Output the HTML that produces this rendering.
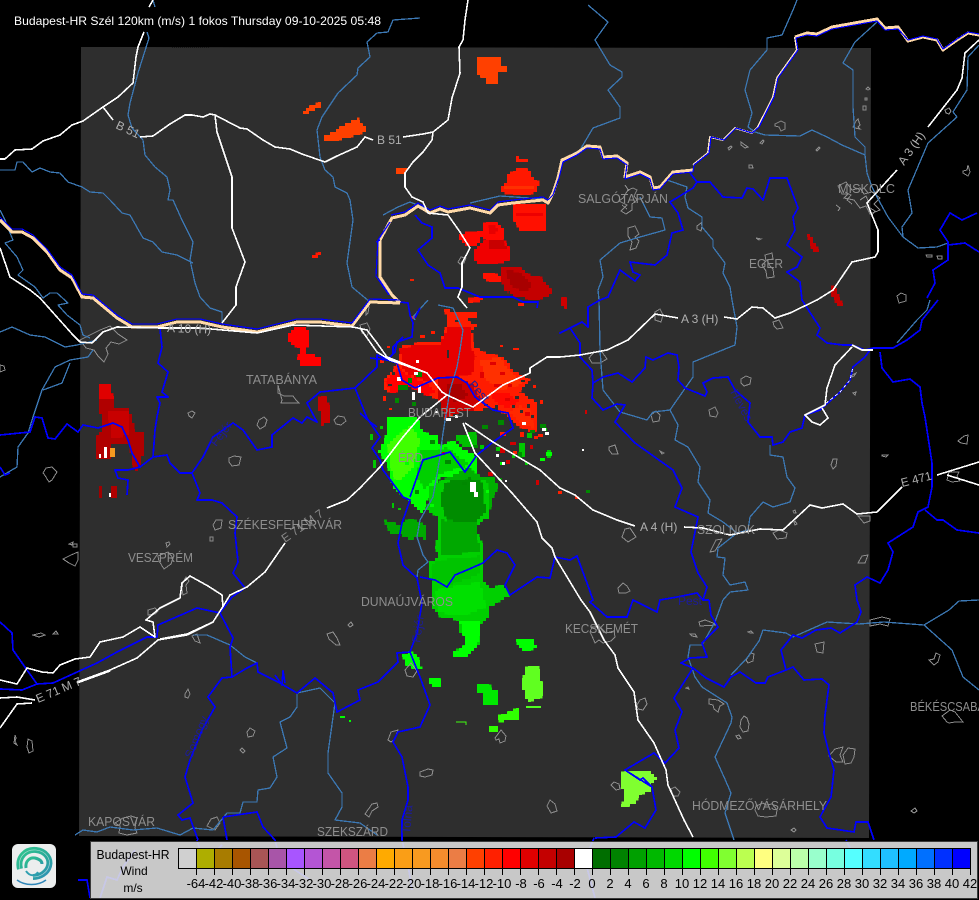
<!DOCTYPE html>
<html><head><meta charset="utf-8"><title>Budapest-HR Wind</title>
<style>
html,body{margin:0;padding:0;background:#000;width:979px;height:900px;overflow:hidden}
svg{display:block;font-family:"Liberation Sans",sans-serif}
.b{fill:none;stroke:#0000ff;stroke-width:1.7;stroke-linejoin:round;shape-rendering:crispEdges}
.l{fill:none;stroke:#3c78b4;stroke-width:1.3;stroke-linejoin:round;shape-rendering:crispEdges}
.w{fill:none;stroke:#fff;stroke-width:1.6;stroke-linejoin:round;shape-rendering:crispEdges}
.t{fill:none;stroke:#8c8c8c;stroke-width:1;shape-rendering:crispEdges}
.c{fill:#8e8e8e;font-size:13px}
.h{fill:#b0b0b0;font-size:12px}
.r{fill:#1c1c9c;font-size:12px}
.n{fill:#000;font-size:13px;text-anchor:middle}
</style></head><body>
<svg width="979" height="900" viewBox="0 0 979 900" xmlns="http://www.w3.org/2000/svg">
<defs>
<filter id="pix" filterUnits="userSpaceOnUse" x="0" y="0" width="979" height="900" color-interpolation-filters="sRGB">
<feFlood x="1" y="1" width="1" height="1" flood-color="#000"/>
<feComposite width="3" height="3"/>
<feTile result="a"/>
<feComposite in="SourceGraphic" in2="a" operator="in"/>
<feMorphology operator="dilate" radius="1"/>
</filter>
<linearGradient id="g" x1="0" y1="0" x2="1" y2="1"><stop offset="0" stop-color="#30c48e"/><stop offset=".6" stop-color="#2aa89a"/><stop offset="1" stop-color="#2f8fb8"/></linearGradient>
</defs>
<rect width="979" height="900" fill="#000"/>
<polygon points="81,47 871,48 869,838 79,836" fill="#2e2e2e"/>
<path d="M172 47h38M520 47h37M195 838h35M560 838h30" stroke="#000" stroke-width="1" stroke-dasharray="1 1"/>

<!-- radar -->
<g filter="url(#pix)" shape-rendering="crispEdges">
<polygon fill="#ff4000" points="477,58 491,58 491,56 492,58 500,58 500,67 507,67 507,73 498,73 498,83 485,83 485,78 477,75"/>
<polygon fill="#ff4000" points="302,112 311,106 321,102 322,106 308,113 303,114"/>
<polygon fill="#ff4000" points="323,137 335,131 345,124 358,118 360,123 365,127 365,132 350,137 342,139 328,142 323,141"/>
<polygon fill="#ff4000" points="396,168 403,168 408,167 405,173 396,173"/>
<polygon fill="#ff1800" points="312,256 318,253 322,251 319,256 314,259 311,258"/>
<polygon fill="#ff1800" points="515,157 518,156 520,159 529,160 529,163 518,162 515,161"/>
<polygon fill="#ff1800" points="515,170 520,168 530,170 533,178 539,182 537,190 530,195 502,193 502,186 507,183 508,175"/>
<rect x="505" y="186" width="28" height="3" fill="#ff3000"/>
<polygon fill="#ff1000" points="512,203 546,203 545,220 545,232 520,230 514,220 512,212"/>
<rect x="515" y="213" width="28" height="3" fill="#ee0000"/>
<polygon fill="#ff0800" points="482,224 495,222 503,228 505,238 498,240 480,238 478,245 465,245 458,238 460,233 482,232"/>
<polygon fill="#e80000" points="487,225 495,224 500,232 490,234"/>
<polygon fill="#f00000" points="485,241 505,241 510,250 511,258 505,262 480,265 474,260 474,250"/>
<polygon fill="#c80000" points="488,241 504,241 508,250 490,248"/>
<polygon fill="#ff1000" points="483,273 490,272 500,276 503,283 485,280"/>
<polygon fill="#c40000" points="500,275 503,266 520,268 530,275 540,276 548,285 553,293 545,298 533,300 515,296 505,290"/>
<polygon fill="#a80000" points="505,270 520,272 532,285 528,292 512,288"/>
<polygon fill="#d00000" points="560,300 564,297 568,300 566,308 562,306"/>
<polygon fill="#ff1000" points="467,299 483,297 484,301 467,302"/>

<polygon fill="#ff0000" points="295,327 303,326 310,332 310,345 305,348 305,355 315,355 320,358 320,367 300,366 298,358 300,348 292,345 287,340 287,335"/>
<polygon fill="#c80000" points="317,398 325,396 329,405 329,422 322,425 320,412 317,405"/>
<polygon fill="#c40000" points="808,234 811,236 819,251 814,253 809,242"/>
<polygon fill="#c40000" points="830,285 835,288 843,305 838,306 832,295"/>

<polygon fill="#b00000" points="100,384 110,384 114,400 114,407 128,407 133,420 134,432 143,432 143,455 138,470 135,472 131,455 130,445 112,445 110,458 97,458 97,437 103,430 103,418 98,410"/>
<polygon fill="#e00000" points="99,385 110,384 113,398 100,398"/>
<polygon fill="#c80000" points="108,412 128,412 130,435 112,438"/>
<rect x="98" y="487" width="4" height="10" fill="#a00000"/>
<rect x="110" y="485" width="7" height="12" fill="#b00000"/>

<polygon fill="#ff1c00" points="442,309 450,308 451,312 465,312 477,313 477,317 466,318 470,323 473,323 480,323 472,330 473,345 482,352 503,357 515,372 530,380 520,392 537,403 538,428 533,433 520,427 507,415 493,407 473,412 460,410 445,420 440,400 420,392 410,385 392,393 385,390 385,380 398,363 403,345 420,343 440,342 447,325 447,315"/>
<polygon fill="#e60000" points="400,348 420,345 440,344 448,328 470,326 470,345 476,356 472,376 440,378 428,382 410,375 402,367"/>
<polygon fill="#ff0000" points="385,382 398,368 410,376 428,384 436,392 428,396 410,387 392,393"/>
<polygon fill="#c80000" points="437,378 457,377 473,384 480,400 473,410 460,412 445,418 438,398"/>
<polygon fill="#a80000" points="446,385 460,384 468,396 455,402 447,398"/>
<polygon fill="#ff3000" points="480,360 500,358 512,374 522,384 500,390 485,378"/>
<polygon fill="#ff2800" points="510,412 520,406 530,410 534,428 524,426"/>
<polygon fill="#ff0800" points="492,392 510,394 520,402 508,408 494,402"/>

<polygon fill="#00ff00" points="378,452 385,440 388,418 417,417 423,433 437,435 440,447 453,440 460,447 477,457 478,473 465,476 440,477 427,500 423,513 408,500 393,487 387,463"/>
<polygon fill="#40ff00" points="388,445 410,425 420,440 412,470 396,482 390,465"/>
<polygon fill="#00d000" points="420,450 448,448 470,465 440,474 425,490 417,478"/>
<polygon fill="#00c000" points="454,437 475,432 478,445 470,448 460,445"/>
<polygon fill="#00b000" points="427,507 443,480 470,467 480,477 493,477 498,487 492,500 488,520 440,520"/>
<polygon fill="#00d000" points="443,480 430,487 427,510 438,517 438,530 436,548 438,558 428,563 428,575 433,583 433,608 440,617 458,620 459,632 467,634 466,645 453,652 453,658 467,657 479,644 480,624 488,617 488,608 510,595 503,585 490,588 483,580 483,572 482,543 476,530 482,520 490,517 487,480"/>
<polygon fill="#008c00" points="445,482 470,478 484,482 485,512 472,526 446,520 440,500"/>
<polygon fill="#00a800" points="441,520 476,522 480,552 441,556"/>
<polygon fill="#00c400" points="438,560 480,556 480,574 450,585 432,578 430,566"/>
<polygon fill="#00e000" points="436,590 480,582 486,607 462,616 438,612"/>
<polygon fill="#00ff00" points="460,622 480,622 478,644 466,656 454,656 454,652 466,645"/>
<polygon fill="#00a800" points="384,520 400,525 410,518 425,525 425,540 418,536 410,540 402,535 390,533"/>
<polygon fill="#00ff00" points="403,655 410,651 418,657 422,670 413,668 405,664"/>
<polygon fill="#00ff00" points="517,640 526,638 534,640 536,647 528,652 518,648"/>
<polygon fill="#00ff00" points="428,678 437,677 442,682 441,687 432,687"/>
<polygon fill="#60ff20" points="525,668 533,665 538,665 541,680 544,690 541,698 528,702 525,696 522,684"/>
<polygon fill="#00e800" points="477,684 490,684 491,690 497,690 497,704 483,704 483,692 477,692"/>
<polygon fill="#30ff00" points="498,716 507,714 510,710 518,709 518,719 500,722"/>
<rect x="488" y="727" width="11" height="4" fill="#30ff00"/>
<polygon fill="#80ff30" points="620,773 634,771 642,770 650,772 657,778 650,785 652,790 640,795 635,803 623,808 620,805 625,800 624,790 620,785"/>
</g>
<g shape-rendering="crispEdges">
<rect x="110" y="448" width="5" height="9" fill="#f59a20"/>
<rect x="104" y="447" width="3" height="11" fill="#fff"/>
<rect x="99" y="454" width="2" height="4" fill="#fff"/>
<rect x="109" y="493" width="2" height="4" fill="#fff"/>
<rect x="410" y="279" width="4" height="2" fill="#f02000"/>
<rect x="526" y="706" width="15" height="2" fill="#50ff20"/>
<path d="M456 722h10v3" fill="none" stroke="#40ff10"/>
<rect x="340" y="716" width="5" height="2" fill="#00ff00"/>
<rect x="349" y="720" width="2" height="2" fill="#00ff00"/>
<!-- holes in precip -->
<path fill="#2e2e2e" d="M510 366h4v3h-4zM521 380h4v2h-4zM525 392h3v3h-3zM515 396h4v3h-4zM527 404h3v4h-3zM520 410h3v3h-3zM531 415h3v3h-3zM512 405h3v3h-3zM484 404h4v2h-4zM392 372h3v3h-3zM388 384h4v2h-4zM398 390h3v3h-3zM455 320h4v2h-4zM470 318h3v3h-3zM447 350h2v8h-2zM495 405h3v3h-3z"/>
<path fill="#e00000" d="M490 362h6v3h-6zM500 372h5v3h-5zM494 384h8v3h-8zM508 384h4v3h-4zM505 398h5v3h-5zM480 372h4v6h-4zM525 412h5v4h-5z"/>
<path fill="#ff1c00" d="M520 432h4v5h-4zM534 436h4v3h-4zM500 432h6v4h-6zM470 300h3v3h-3zM380 360h4v3h-4zM383 396h3v5h-3zM411 316h4v3h-4zM518 303h6v3h-6zM387 346h3v2h-3zM420 335h5v3h-5zM431 331h4v3h-4zM513 348h6v2h-6zM500 345h3v2h-3zM540 400h3v4h-3zM533 385h3v3h-3zM389 408h3v2h-3z"/>
<path fill="#00c800" d="M370 434h3v6h-3zM380 426h3v3h-3zM373 460h3v8h-3zM392 503h2v5h-2zM398 508h3v2h-3zM519 443h6v14h-6zM547 450h4v8h-4zM527 433h5v5h-5zM543 428h4v3h-4zM496 447h5v4h-5zM512 455h3v3h-3zM525 462h3v3h-3zM480 445h4v4h-4z"/>
<path fill="#00ff00" d="M405 462h4v3h-4zM500 462h5v3h-5zM540 458h5v3h-5zM546 452h6v4h-6zM486 490h3v3h-3zM430 504h4v3h-4z"/>
<path fill="#008800" d="M416 372h6v5h-6zM398 385h10v5h-10zM408 378h4v5h-4zM412 402h4v4h-4zM498 420h6v5h-6zM530 430h5v3h-5zM540 424h6v4h-6zM462 482h5v3h-5zM498 478h4v3h-4zM473 445h5v3h-5zM518 452h4v6h-4zM586 490h4v3h-4zM395 398h4v5h-4zM482 425h6v4h-6zM430 440h5v4h-5zM445 460h6v4h-6zM415 490h4v4h-4z"/>
<path fill="#d00000" d="M442 452h3v3h-3zM500 448h5v5h-5zM510 442h6v3h-6zM506 460h4v4h-4zM530 445h3v4h-3zM475 493h3v4h-3zM488 472h5v4h-5zM536 480h3v5h-3zM585 410h2v4h-2z"/>
<path fill="#fff" d="M416 360h3v3h-3zM414 372h4v3h-4zM397 377h4v4h-4zM418 385h3v8h-3zM412 392h3v8h-3zM446 418h5v3h-5zM455 415h3v3h-3zM470 482h6v10h-6zM474 492h4v5h-4zM496 454h3v3h-3zM542 428h4v3h-4zM505 480h2v2h-2zM545 432h4v3h-4zM522 422h4v3h-4zM435 411h3v2h-3zM502 462h3v3h-3zM582 449h2v2h-2z"/>
<path fill="#ff2000" d="M538 434h5v3h-5zM513 451h4v3h-4zM558 491h4v3h-4zM575 496h3v3h-3z"/>
</g>

<!-- towns -->
<g class="t">
<path d="M775 124l6-3 4 2v6l-4 2-2-4-4-1zM853 127l3-6 2-2 2 6-2 2 2 2-5-1zM628 190l-5 8-4 3 8 4-6 6 5 3 6-4 0-6 5-4-3-4 3-6-4-2zM628 228l7-2 4 8-4 3 4 4-3 7-6 2 2-8-4-6zM697 226l4-3 1 3-1 5-4-2zM765 255l7-2 1 6-6 1 3 6 3 3 1 8-7 1-1-7-4-6 4-4zM838 186l8-4 6 8 8-2 4 6 8-2 8 6-6 6 6 6-10 4-4-8-6 2-6-8-10-2 4-4-6 0zM741 142l4 3 3 2-3 1-4-3zM760 143l3-3 1 1-2 3zM728 148l3-2 1 1-3 3zM816 150l3-3 1 1-3 3zM749 165l3 0 1 3-4 0zM756 238l5 1-2 1zM866 89l2-2 2 2-2 1zM865 98h2v2h-2zM863 106h3v4h-3zM945 110l4-2 2 3-2 3-3-1zM963 171l4-1 1-5 2 7-2 4-5-3zM926 255h6v2h-5zM937 256h5v3h-4zM897 296l4-3 5 2 0 6-7 2zM589 358l5-6 8 0 5 7-7 4-8 0zM655 312l5-3 3 6-2 7-6-2zM773 322l6-2 4 8-6 1-3-3zM741 379l5-3 5 2-1 6-6 2-3-3zM709 410l6-3 3 6-2 4-6-1zM651 415l5-4 4 4-1 6-6 1zM609 447l6-2 3 9-6 0-3-4zM660 451l4 2-2 1zM622 537l3-8 5-1 6 9-8 5zM773 533l6-3 8 3-1 5-9 1zM710 552l6-12 6-1-4 7-3 5zM858 563l4-7 6-1-3 8zM618 588l5-5 4 3 3 5-4 2-7 0zM831 465l2-6 4 0-1 7-3 3zM958 441l6-5 4-1-1 9-6-1zM882 455h6l-2 2-4-1zM947 480l2-8 10 0-2 4 3 5-8 1zM858 516l12 0 0 5-6 2zM793 511l2-1 1 3-2 0zM795 521l2 3-2 1-1-3zM852 375l4-2-2 3-2 1zM853 393l3-1-1 3zM257 425l2-5 5-3 3 3-2 6-5 3zM188 413l4-2 3 2-3 5-3-2zM229 458l5-2 7 1-2 8-7 1-3-4zM334 420l4-4 6 1 2 4-5 4-5-1zM278 385l0 8 6 3 9 0 3 4 3 3-18 0 1-3zM43 473l3-5 6-1 5 5-5 8-3 2-5-8zM80 340l20-10 10-4 8 8 9 6-8 4-8-2-5 6 2 6-4 8-6-6-4-6-8-2zM0 365l4 1 1 4-5 2zM360 325l7-2 3 6-3 7-5-3zM366 305l3 2-1 6-2 2zM213 525l3-5 6 0-1 8-6 2zM210 537h3v4h-3zM166 543l3-1 1 2-3 3zM158 556l10-4 5 6-2 6-7 5-5-8zM63 559l8-4 7-3 0 8-3 6-6-3zM69 544l4-2-1 3zM73 544h4v3h-4zM183 582l3-5 3 4-3 4 1 8-4 2-1-6zM148 610l7-2 3 3-3 3-7 1zM185 694l3-5 2 5-2 4-3-1zM247 732l3-4 5 3-2 5-5 1zM240 750l2-2 3 3-2 2zM327 634l6-2 4 6 3 7-4 0-7-6zM348 625l3-3 2 3-3 2zM365 814l7-10 5-1 1 4-6 4-3 6zM388 740l3-8 7-2-4 10-3 2zM207 826l4-7 6-2 3 6-5 7-6-3zM115 823l8-5 8-2 6 2-2 10 2 5-10 2-8-2 1-7zM27 747l1-8 4 2 1 10-4 2zM15 735l1 3-1 3 2 4-3-2zM33 635l8-2 4 2-6 2zM53 634l5 0-2-3zM192 636l5-2 3 9-5-2zM405 670l6-7 6 8-4 6-6-1zM590 632l2-5 8 0 6 6 8-2 1 6-4 4-8 2-4-3-4 3-3-7zM637 705l3-5 5-2 2 6-4 6-5-1zM611 785l3-3 5 2 1 5-4 1zM547 806l3-6 5 4 2 7-6 2zM495 738l6-8 5 6-1 5-5 2-1-4-3 1zM420 772l8-3 5 1-1 5-7 2-5-1zM671 789l4-2 5 5-2 4-5 0zM709 699l9 1 6 4-4 2-2 6-4-3-1-4-4-1zM741 720l3-4 3 2 2 6-1 7-5 1-3-5zM736 736l3-1 2 3-3 1zM746 660l5-7 3 1-1 7-5 2zM699 622l6-2 8 3 3 2-16 1zM690 634l5 0 2 3-5-1zM748 632l3-1 2 2-3 0zM815 644l9-2-1 11-6-1zM829 756l6-7 8-2-3 8 3 7-7 0zM843 755l5-7 7 1-1 8-3 6-6 1zM756 806l7-3 3 2 6-1 5 6-1 6-10 1-8-1-3-6zM791 830l3-2 2 2-2 2zM911 811l4-3 2 3-3 2zM942 716l8-6 5 2 8 10-8 0-6 1-2-1zM929 660l5-1 2-6 4 2-2 7-4 3zM870 620l12-3 8 2-2 7-8-2-10 2zM686 688l2-1 1 2zM458 262l3-5 5 1-2 5-4 1z"/>
<path d="M845 192l6 3-4 5 5 4M860 200l6-4 3 7M870 208l5 3-3 4M836 205l4 3-2 3M625 185l4 6M622 205l5 4"/>
</g>

<!-- light rivers -->
<g class="l">
<path d="M0 170H15L17 162H23L32 172 40 168 50 172 60 173 68 182 82 187 90 192 103 193 110 200 122 213 130 215 143 238 153 242 162 252 177 255 193 263"/>
<path d="M153 0L155 7M147 32L149 38 143 57 138 73 130 103 128 115 132 128 143 140 145 155 155 167 167 177 170 190 168 200 173 200 182 220 193 242 190 260 195 283 200 297 210 308 222 312 222 323"/>
<path d="M420 18L393 20 388 32 377 33 367 42 370 57 358 68 357 75 338 93 322 117 317 130 320 157 325 170 333 177 335 187 347 193 350 200 353 220 347 263 352 287 370 302"/>
<path d="M588 5L608 22 595 40 610 65 622 72 622 77 608 90 620 107 620 118 593 128 580 150 562 160"/>
<path d="M797 0L793 10 782 35 767 38 767 50 750 70 745 90 752 113 748 127 755 132 765 135 800 136 812 130 827 137 842 145 865 155 867 173 872 187 877 197 888 217 903 237 918 248 937 247 948 243"/>
<path d="M877 22L855 42 843 63 853 70 853 107 855 137 865 147 865 155"/>
<path d="M979 45L968 57 967 90 953 112 957 117 928 143 908 190 912 213 902 227 903 237"/>
<path d="M667 180L687 187 685 197 688 208 702 217 702 227 713 240 713 247 725 263 723 273 730 287 732 300 737 327 735 345 693 362 693 377 670 410 678 425 675 440 688 447 700 467 698 482 710 500 708 513 723 522 737 533 718 548 717 557 725 558 723 575 730 585 745 582 748 590 730 592 723 600 715 622 702 645 690 645 688 657 695 677 702 687 727 703 732 717 731 723 715 757 724 777 731 793 725 813 734 840"/>
<path d="M640 197L650 217 662 218 665 230 640 237 620 243 600 260 603 277 598 290 599 300 600 350 603 390 620 412 647 420 653 412 670 410"/>
<path d="M770 445L770 455 783 457 787 477 795 488 790 502 773 507 763 502 750 517 748 530 730 535"/>
<path d="M731 675L747 658 759 641 763 630 786 633 793 637 827 622 859 624 884 622 924 625 949 610 959 601 979 600M924 625L952 650 963 677 979 690"/>
<path d="M0 210L5 220 10 233 13 240 5 243 17 257 23 270 18 275 35 287 43 298 50 293 57 293 68 303 58 305 67 315 80 325 83 335 90 338"/>
<path d="M0 332L12 327 30 335 45 337 65 347 77 345 97 340"/>
<path d="M93 350L88 357 70 360 55 367 42 390 33 417 28 433 18 447 17 467 0 477M70 363L62 383 43 390"/>
<path d="M75 835L83 830 97 832 110 827 133 830 157 828 180 835 193 828 213 830 227 813 240 813 243 802 257 802 258 790 270 788 277 777 273 757 287 748 280 722 290 717 297 707 297 693 320 688 335 703 328 753 328 773 342 793 342 807 335 820 360 823 377 835"/>
<path d="M193 635H207L230 645 245 657 257 663"/>
<path d="M383 215L398 207 410 202 425 208M470 203L500 196 515 197 543 199M428 300L413 317 415 320M438 305L453 308 463 330 460 350 457 367 450 390 443 433 440 457 433 497 420 520 417 537 423 555 428 562 418 570 417 578"/>
<path d="M897 343L917 320 927 310 930 300"/>
</g>

<!-- blue rivers -->
<g class="b">
<path d="M690 173L697 182 693 188 670 202 678 213 683 230 672 233 667 255 655 265 630 262 633 272 640 275 635 281 620 270 608 297 600 300 588 307 588 327 582 322 570 328 560 333 570 328 580 343 580 357 592 370 593 383 592 398 603 410 617 404 625 405 615 422 635 443 673 470 682 488 675 507 698 517 691 552 698 573 707 587 703 600 709 600"/>
<path d="M697 182L710 182 723 197 742 198 747 188 753 189 763 200 770 178 787 178 798 208 793 217 795 230 787 245 802 257 797 267 787 272 800 282 802 300 820 328 817 335 827 343 843 345 852 345 865 350 873 348 893 348 907 340 920 330 922 320 938 300"/>
<path d="M865 357L853 367 850 380 840 392 820 410 805 415 802 428 790 432 783 442 773 445 772 437 760 437 748 422 750 403 735 390 728 377 713 378 703 383 707 392 705 396 685 388 678 380 679 367 677 355 668 353 653 360 646 357 645 368 632 382 618 373 603 377 593 383"/>
<path d="M865 357L870 350M880 352L882 368 893 382 910 379 920 387 922 403 925 417 932 463 932 487 928 507 918 512 913 527 888 543 893 552 888 570 880 583 867 577 855 585 857 600 861 612 857 622 840 633 831 628 816 630 802 638 793 635 781 650 786 670"/>
<path d="M925 510L937 520 943 520 957 530 979 533"/>
<path d="M927 298L935 283 933 270 948 260 948 242 940 230 950 213 962 220 977 213M948 245L965 243 979 252"/>
<path d="M415 215L422 223 432 227 432 238 418 250 428 265 440 273 445 288 458 288 480 297 513 297 523 302 538 302 537 308"/>
<path d="M380 280L388 292 400 302 408 303 410 315 413 323 412 337 397 342 395 352 387 360 370 358M420 308L415 318"/>
<path d="M0 435L30 432 35 417 42 418 48 438 55 439 67 424 78 432 83 425 98 428 113 423 122 427 128 440 132 453 140 467 153 457 167 455 170 463 180 473 192 473 203 457 213 437 233 423 243 430 257 450 272 447 272 435 293 418 302 423 307 417 317 422 307 403 320 392 355 388 377 367 377 355 388 360 397 363"/>
<path d="M160 328L162 347 158 363 168 372 162 392 168 397 157 397 160 403 157 417 155 430 153 457 140 467 128 470 115 470 118 478 128 480 127 495M192 473L200 493 197 500 212 500 222 503 237 517 235 533 238 562 233 573 245 588 232 597 220 613 233 638 230 647 232 677 222 678 208 697 215 707 202 730 190 760 185 777 193 803 178 815 182 820 190 818 198 840"/>
<path d="M355 388L367 418 380 437 372 448 380 460 383 470 403 497 410 500 402 523 398 543 403 565 417 578 422 603 417 633 410 652 420 677 430 705 420 727 398 732 393 742 402 757 408 787 408 800 402 820 402 840"/>
<path d="M360 413L370 422 377 427"/>
<path d="M415 388L438 378 457 377 467 383 475 397 493 410 508 413 513 428 493 442 477 455 465 472 450 452 423 460 417 477 410 497M403 337L393 347 393 354M397 363L402 380 415 388"/>
<path d="M420 577L435 580 447 587 455 575 467 570 483 563 497 550 507 553 515 565 505 585 510 595 537 577 550 578 555 557 570 560 577 556 587 583 593 600 590 602 607 617 627 617 633 600 657 612 660 600 677 597 697 593 703 600"/>
<path d="M0 689L22 690 37 684 53 683 97 663 117 652 147 637 157 637 158 625 197 608 220 613 233 638M0 622L12 633 13 650 27 670 37 684"/>
<path d="M232 677L247 668 257 663 258 672 280 683 297 693 315 678 320 682 333 693 337 712 360 700 358 690 378 682 398 662 397 653 410 652"/>
<path d="M275 675L282 685 283 671 285 683"/>
<path d="M223 817L227 840M223 817L257 812 263 827 275 840"/>
<path d="M709 600L711 615 718 627 702 643 707 657 690 658 681 663 693 668 674 698 682 712 675 730 679 748 665 763 654 753 625 770 652 787 656 810 645 828 634 822 616 837 595 838"/>
<path d="M625 770L640 780 643 778 652 787"/>
<path d="M693 668L706 678 724 687 731 677 740 672 756 683 765 683 768 677 786 670 793 667 804 680 822 679 829 685 825 715 824 733 829 753 834 770 831 797 820 817 827 828 854 832 856 822 868 822 874 840"/>
<path d="M78 880H87L90 898M846 840L850 848"/>
<path d="M100 898L107 877 117 880 123 867 135 850M197 840L200 850 215 852 222 845M275 840L280 860 310 880M402 840L408 865 412 890M594 838L585 860 595 898"/>
<path d="M0 467L5 475 10 473"/>
</g>

<!-- Border -->
<path d="M0 220L12 232 22 232 33 238 47 252 60 270 72 278 82 297 93 298 117 318 132 327 157 327 177 322 200 322 222 327 257 332 297 322 320 322 352 326 370 302 400 303M400 303L392 295 380 277 380 240 389 223 392 218 405 215 418 206 430 213 440 209 448 212 470 208 490 213 498 205 513 203 543 200 548 203 553 193 558 178 562 160 577 153 587 146 600 147 603 157 617 156 627 163 625 177 640 172 650 177 653 188 660 187 673 172 693 170" fill="none" stroke="#ffd9a8" stroke-width="3" stroke-linejoin="round" shape-rendering="crispEdges"/>
<path d="M693 165L708 153 710 137 723 140 735 128 752 133 758 127 773 97 777 78 797 50 795 37" fill="none" stroke="#ffe8c8" stroke-width="2" stroke-linejoin="round" shape-rendering="crispEdges"/>
<path d="M795 37L807 33 817 34 832 27 877 19 885 28 898 27 908 41 923 37 937 40 943 50 957 40 968 33 979 35" fill="none" stroke="#ffd9a8" stroke-width="3" stroke-linejoin="round" shape-rendering="crispEdges"/>
<path d="M0 217L12 229 22 229 33 235 47 249 60 267 72 275 82 294 93 295 117 315 132 324 157 324 177 319 200 319 222 324 257 329 297 319 320 319 352 323 370 299 400 300M391 215L405 212 418 203 430 210 440 206 448 209 470 205 490 210 498 202 513 200 543 197 548 200M380 240L376 242M390 222L378 240 376 276 389 295" fill="none" stroke="#0000ff" stroke-width="1.3" stroke-linejoin="round" shape-rendering="crispEdges"/>
<path d="M548 200L553 195 559 178 563 162 577 155 587 148 600 149 603 159 617 158 627 165 625 179 640 174 650 179 653 190 660 189 673 174 693 172 694 165 709 153 711 137 724 140 736 128 752 133 759 127 774 97 778 78 798 50 796 38 807 35 817 36 832 29 877 21 885 30 898 29 908 40 923 36 937 39 943 49 957 39 968 32 979 34" fill="none" stroke="#0000ff" stroke-width="1.2" stroke-linejoin="round" shape-rendering="crispEdges"/>

<!-- roads -->
<g class="w">
<path d="M153 0L149 7M144 32L138 47 136 57 133 83 118 97 103 107 83 121 72 125 60 135 43 141 32 149 15 150 5 159H0"/>
<path d="M103 107L113 120M140 137L153 136 170 124 185 115 192 115 203 117 210 114 215 115 240 128 247 129 263 140 275 147 290 149 302 154 325 162 337 156 357 147 365 137 373 140M403 137L423 134 433 132 448 120 452 98 460 73 459 47 463 40 465 20 468 0"/>
<path d="M215 115L217 132 223 150 232 177 232 228 245 262 236 287 236 305 222 323"/>
<path d="M433 132L432 140 423 152 413 162 405 173 405 187 412 197 423 202 428 213 448 215 460 232 470 248 462 263 462 287 458 297 467 308"/>
<path d="M0 248L10 277 30 290 40 298 73 335 80 342 92 343 103 332 117 327 160 328 200 328 257 333 293 325 353 327 367 330 377 343 387 357 427 373 442 392 447 395"/>
<path d="M360 328L377 352 390 360 427 373"/>
<path d="M560 357L580 355 607 350 628 340 655 314 678 318M724 317L737 319 752 307 763 308 775 318 790 313 817 300 833 290 852 262 875 257 878 252 878 230 867 203 877 192 897 170M928 127L957 90 962 78 965 53 979 40"/>
<path d="M560 357L547 357 530 368 530 373 503 385 473 407 447 395"/>
<path d="M463 423L475 453 500 480 512 493 537 522 542 538 552 548 555 557 581 600 590 612 604 640 615 655 618 668 634 692 638 720 654 743 666 770 668 785 684 820 693 837"/>
<path d="M465 423L493 442 540 470 560 488 575 495 593 510 617 520 635 526M684 527L703 528 730 535 760 529 783 530 810 505 822 508 843 504 857 514 877 512 902 487M937 475L979 462M947 475L979 485"/>
<path d="M852 347L835 365 827 388 825 405 805 415 812 422 820 425 828 418 822 408M852 345L862 350 873 350"/>
<path d="M447 395L420 417 403 437 380 467 360 488 347 500 327 508"/>
<path d="M285 543L265 572 247 587 230 595 222 608 213 622 187 635 158 640 137 658 110 670 77 682M35 700L17 697 0 698"/>
<path d="M0 680L17 684 27 668 42 672 53 673 60 665 75 659 90 657 100 642 123 637 140 627 155 637 153 622 146 620 160 608 180 598 182 583 190 576 208 586 222 595 223 607"/>
<path d="M0 728L17 704 32 703M213 622L187 634 160 639M77 683L110 671"/>
</g>
<path d="M805 415L820 408 840 392 850 380 853 367" fill="none" stroke="#fff" stroke-width=".9" stroke-dasharray="3 3" shape-rendering="crispEdges"/>

<!-- labels -->
<g>
<text class="c" x="578" y="203" textLength="90" lengthAdjust="spacingAndGlyphs">SALGÓTARJÁN</text>
<text class="c" x="838" y="193" textLength="57" lengthAdjust="spacingAndGlyphs">MISKOLC</text>
<text class="c" x="749" y="268" textLength="34" lengthAdjust="spacingAndGlyphs">EGER</text>
<text class="c" x="246" y="384" textLength="71" lengthAdjust="spacingAndGlyphs">TATABÁNYA</text>
<text class="c" x="408" y="417" textLength="63" lengthAdjust="spacingAndGlyphs">BUDAPEST</text>
<text class="c" x="398" y="462" textLength="25" lengthAdjust="spacingAndGlyphs">ÉRD</text>
<text class="c" x="697" y="534" textLength="58" lengthAdjust="spacingAndGlyphs">SZOLNOK</text>
<text class="c" x="565" y="633" textLength="73" lengthAdjust="spacingAndGlyphs">KECSKEMÉT</text>
<text class="c" x="361" y="606" textLength="92" lengthAdjust="spacingAndGlyphs">DUNAÚJVÁROS</text>
<text class="c" x="228" y="529" textLength="114" lengthAdjust="spacingAndGlyphs">SZÉKESFEHÉRVÁR</text>
<text class="c" x="128" y="562" textLength="65" lengthAdjust="spacingAndGlyphs">VESZPRÉM</text>
<text class="c" x="88" y="826" textLength="67" lengthAdjust="spacingAndGlyphs">KAPOSVÁR</text>
<text class="c" x="317" y="836" textLength="71" lengthAdjust="spacingAndGlyphs">SZEKSZÁRD</text>
<text class="c" x="692" y="810" textLength="135" lengthAdjust="spacingAndGlyphs">HÓDMEZŐVÁSÁRHELY</text>
<text class="c" x="910" y="711" textLength="75" lengthAdjust="spacingAndGlyphs">BÉKÉSCSABA</text>
</g>

<text class="h" x="0" y="0" transform="translate(115,128) rotate(25)">B 51</text>
<text class="h" x="377" y="144">B 51</text>
<text class="h" x="167" y="332" transform="rotate(2 167 332)">A 10 (H)</text>
<text class="h" x="681" y="323">A 3 (H)</text>
<text class="h" x="0" y="0" transform="translate(904,166) rotate(-55)">A 3 (H)</text>
<text class="h" x="640" y="531">A 4 (H)</text>
<text class="h" x="0" y="0" transform="translate(902,487) rotate(-14)">E 471</text>
<text class="h" x="0" y="0" transform="translate(38,703) rotate(-23)">E 71 M 7</text>
<text class="h" x="0" y="0" fill-opacity=".7" transform="translate(285,543) rotate(-35)">E 71 M 7</text>

<text class="r" x="0" y="0" transform="translate(730,392) rotate(62)">Heves</text>
<text class="r" x="0" y="0" transform="translate(192,759) rotate(-68)">Somogy</text>
<text class="r" x="0" y="0" transform="translate(410,834) rotate(-85)">Tolna</text>
<text class="r" x="0" y="0" transform="translate(216,447) rotate(-52)">Fejér</text>
<text class="r" x="0" y="0" transform="translate(420,643) rotate(-82)">Fejér</text>
<text class="r" x="0" y="0" transform="translate(468,385) rotate(48)">Pest</text>
<text class="r" x="678" y="605">Pest</text>

<text x="14" y="25" fill="#fff" font-size="12" textLength="367" lengthAdjust="spacingAndGlyphs">Budapest-HR Szél 120km (m/s) 1 fokos Thursday 09-10-2025 05:48</text>

<!-- legend panel -->
<rect x="90.5" y="841.5" width="887" height="57" fill="#e4e4e4" fill-opacity=".88" stroke="#3a3a3a" stroke-width="1"/>
<g stroke="#000" stroke-width="1" shape-rendering="crispEdges">
<rect x="178.5" y="848.5" width="18" height="20" fill="#d0d0d0"/>
<rect x="196.5" y="848.5" width="18" height="20" fill="#aeae00"/>
<rect x="214.5" y="848.5" width="18" height="20" fill="#a87c00"/>
<rect x="232.5" y="848.5" width="18" height="20" fill="#a85500"/>
<rect x="250.5" y="848.5" width="18" height="20" fill="#a85555"/>
<rect x="268.5" y="848.5" width="18" height="20" fill="#a855a8"/>
<rect x="286.5" y="848.5" width="18" height="20" fill="#a855ff"/>
<rect x="304.5" y="848.5" width="18" height="20" fill="#b455d4"/>
<rect x="322.5" y="848.5" width="18" height="20" fill="#c455a8"/>
<rect x="340.5" y="848.5" width="18" height="20" fill="#d05580"/>
<rect x="358.5" y="848.5" width="18" height="20" fill="#eb7d45"/>
<rect x="376.5" y="848.5" width="18" height="20" fill="#ffaa00"/>
<rect x="394.5" y="848.5" width="18" height="20" fill="#fa9e16"/>
<rect x="412.5" y="848.5" width="18" height="20" fill="#f89a20"/>
<rect x="430.5" y="848.5" width="18" height="20" fill="#f58c2d"/>
<rect x="448.5" y="848.5" width="18" height="20" fill="#eb7d45"/>
<rect x="466.5" y="848.5" width="18" height="20" fill="#ff4000"/>
<rect x="484.5" y="848.5" width="18" height="20" fill="#ff2000"/>
<rect x="502.5" y="848.5" width="18" height="20" fill="#ff0000"/>
<rect x="520.5" y="848.5" width="18" height="20" fill="#e00000"/>
<rect x="538.5" y="848.5" width="18" height="20" fill="#c40000"/>
<rect x="556.5" y="848.5" width="18" height="20" fill="#a80000"/>
<rect x="574.5" y="848.5" width="18" height="20" fill="#ffffff"/>
<rect x="592.5" y="848.5" width="18" height="20" fill="#006e00"/>
<rect x="610.5" y="848.5" width="18" height="20" fill="#008200"/>
<rect x="628.5" y="848.5" width="18" height="20" fill="#00a000"/>
<rect x="646.5" y="848.5" width="18" height="20" fill="#00b800"/>
<rect x="664.5" y="848.5" width="18" height="20" fill="#00d800"/>
<rect x="682.5" y="848.5" width="18" height="20" fill="#00ff00"/>
<rect x="700.5" y="848.5" width="18" height="20" fill="#40ff00"/>
<rect x="718.5" y="848.5" width="18" height="20" fill="#80ff30"/>
<rect x="736.5" y="848.5" width="18" height="20" fill="#bbff50"/>
<rect x="754.5" y="848.5" width="18" height="20" fill="#ffff80"/>
<rect x="772.5" y="848.5" width="18" height="20" fill="#ddff99"/>
<rect x="790.5" y="848.5" width="18" height="20" fill="#bbffaa"/>
<rect x="808.5" y="848.5" width="18" height="20" fill="#99ffcc"/>
<rect x="826.5" y="848.5" width="18" height="20" fill="#77ffe0"/>
<rect x="844.5" y="848.5" width="18" height="20" fill="#55ffff"/>
<rect x="862.5" y="848.5" width="18" height="20" fill="#33ddff"/>
<rect x="880.5" y="848.5" width="18" height="20" fill="#1fc0ff"/>
<rect x="898.5" y="848.5" width="18" height="20" fill="#00aaff"/>
<rect x="916.5" y="848.5" width="18" height="20" fill="#0070ff"/>
<rect x="934.5" y="848.5" width="18" height="20" fill="#0030ff"/>
<rect x="952.5" y="848.5" width="18" height="20" fill="#0000ff"/>
<path d="M196.5 868v7M214.5 868v7M232.5 868v7M250.5 868v7M268.5 868v7M286.5 868v7M304.5 868v7M322.5 868v7M340.5 868v7M358.5 868v7M376.5 868v7M394.5 868v7M412.5 868v7M430.5 868v7M448.5 868v7M466.5 868v7M484.5 868v7M502.5 868v7M520.5 868v7M538.5 868v7M556.5 868v7M574.5 868v7M592.5 868v7M610.5 868v7M628.5 868v7M646.5 868v7M664.5 868v7M682.5 868v7M700.5 868v7M718.5 868v7M736.5 868v7M754.5 868v7M772.5 868v7M790.5 868v7M808.5 868v7M826.5 868v7M844.5 868v7M862.5 868v7M880.5 868v7M898.5 868v7M916.5 868v7M934.5 868v7M952.5 868v7M970.5 868v7" fill="none"/>
</g>
<g font-size="12" fill="#000" text-anchor="middle">
<text x="133" y="859" font-size="12.5" textLength="73" lengthAdjust="spacingAndGlyphs">Budapest-HR</text>
<text x="134" y="875">Wind</text>
<text x="133" y="892">m/s</text>
</g>
<g>
<text class="n" x="196" y="888">-64</text><text class="n" x="214" y="888">-42</text><text class="n" x="232" y="888">-40</text><text class="n" x="250" y="888">-38</text><text class="n" x="268" y="888">-36</text><text class="n" x="286" y="888">-34</text><text class="n" x="304" y="888">-32</text><text class="n" x="322" y="888">-30</text><text class="n" x="340" y="888">-28</text><text class="n" x="358" y="888">-26</text><text class="n" x="376" y="888">-24</text><text class="n" x="394" y="888">-22</text><text class="n" x="412" y="888">-20</text><text class="n" x="430" y="888">-18</text><text class="n" x="448" y="888">-16</text><text class="n" x="466" y="888">-14</text><text class="n" x="484" y="888">-12</text><text class="n" x="502" y="888">-10</text><text class="n" x="521" y="888">-8</text><text class="n" x="539" y="888">-6</text><text class="n" x="557" y="888">-4</text><text class="n" x="575" y="888">-2</text><text class="n" x="592" y="888">0</text><text class="n" x="610" y="888">2</text><text class="n" x="628" y="888">4</text><text class="n" x="646" y="888">6</text><text class="n" x="664" y="888">8</text><text class="n" x="682" y="888">10</text><text class="n" x="700" y="888">12</text><text class="n" x="718" y="888">14</text><text class="n" x="736" y="888">16</text><text class="n" x="754" y="888">18</text><text class="n" x="772" y="888">20</text><text class="n" x="790" y="888">22</text><text class="n" x="808" y="888">24</text><text class="n" x="826" y="888">26</text><text class="n" x="844" y="888">28</text><text class="n" x="862" y="888">30</text><text class="n" x="880" y="888">32</text><text class="n" x="898" y="888">34</text><text class="n" x="916" y="888">36</text><text class="n" x="934" y="888">38</text><text class="n" x="952" y="888">40</text><text class="n" x="970" y="888">42</text>
</g>

<!-- logo -->
<rect x="12" y="844" width="44" height="44" rx="6" fill="#eceeee"/>
<path d="M20 869C17 857 26 849 36 850 46 851 51 859 49 866 47 873 40 877 33 877" fill="none" stroke="url(#g)" stroke-width="6"/>
<path d="M20 869C17 857 26 849 36 850 46 851 51 859 49 866 47 873 40 877 33 877" fill="none" stroke="#eceeee" stroke-width=".6" opacity=".7"/>
<path d="M26 868C25 861 30 857 35 858 39 859 42 861 42 864" fill="none" stroke="url(#g)" stroke-width="3"/>
<path d="M26 871C30 877 36 876 38 872" fill="none" stroke="#2f9fb0" stroke-width="2"/>
<path d="M17 880C25 886 38 886 46 880" fill="none" stroke="#2f86b8" stroke-width="1.5"/>
</svg>
</body></html>
